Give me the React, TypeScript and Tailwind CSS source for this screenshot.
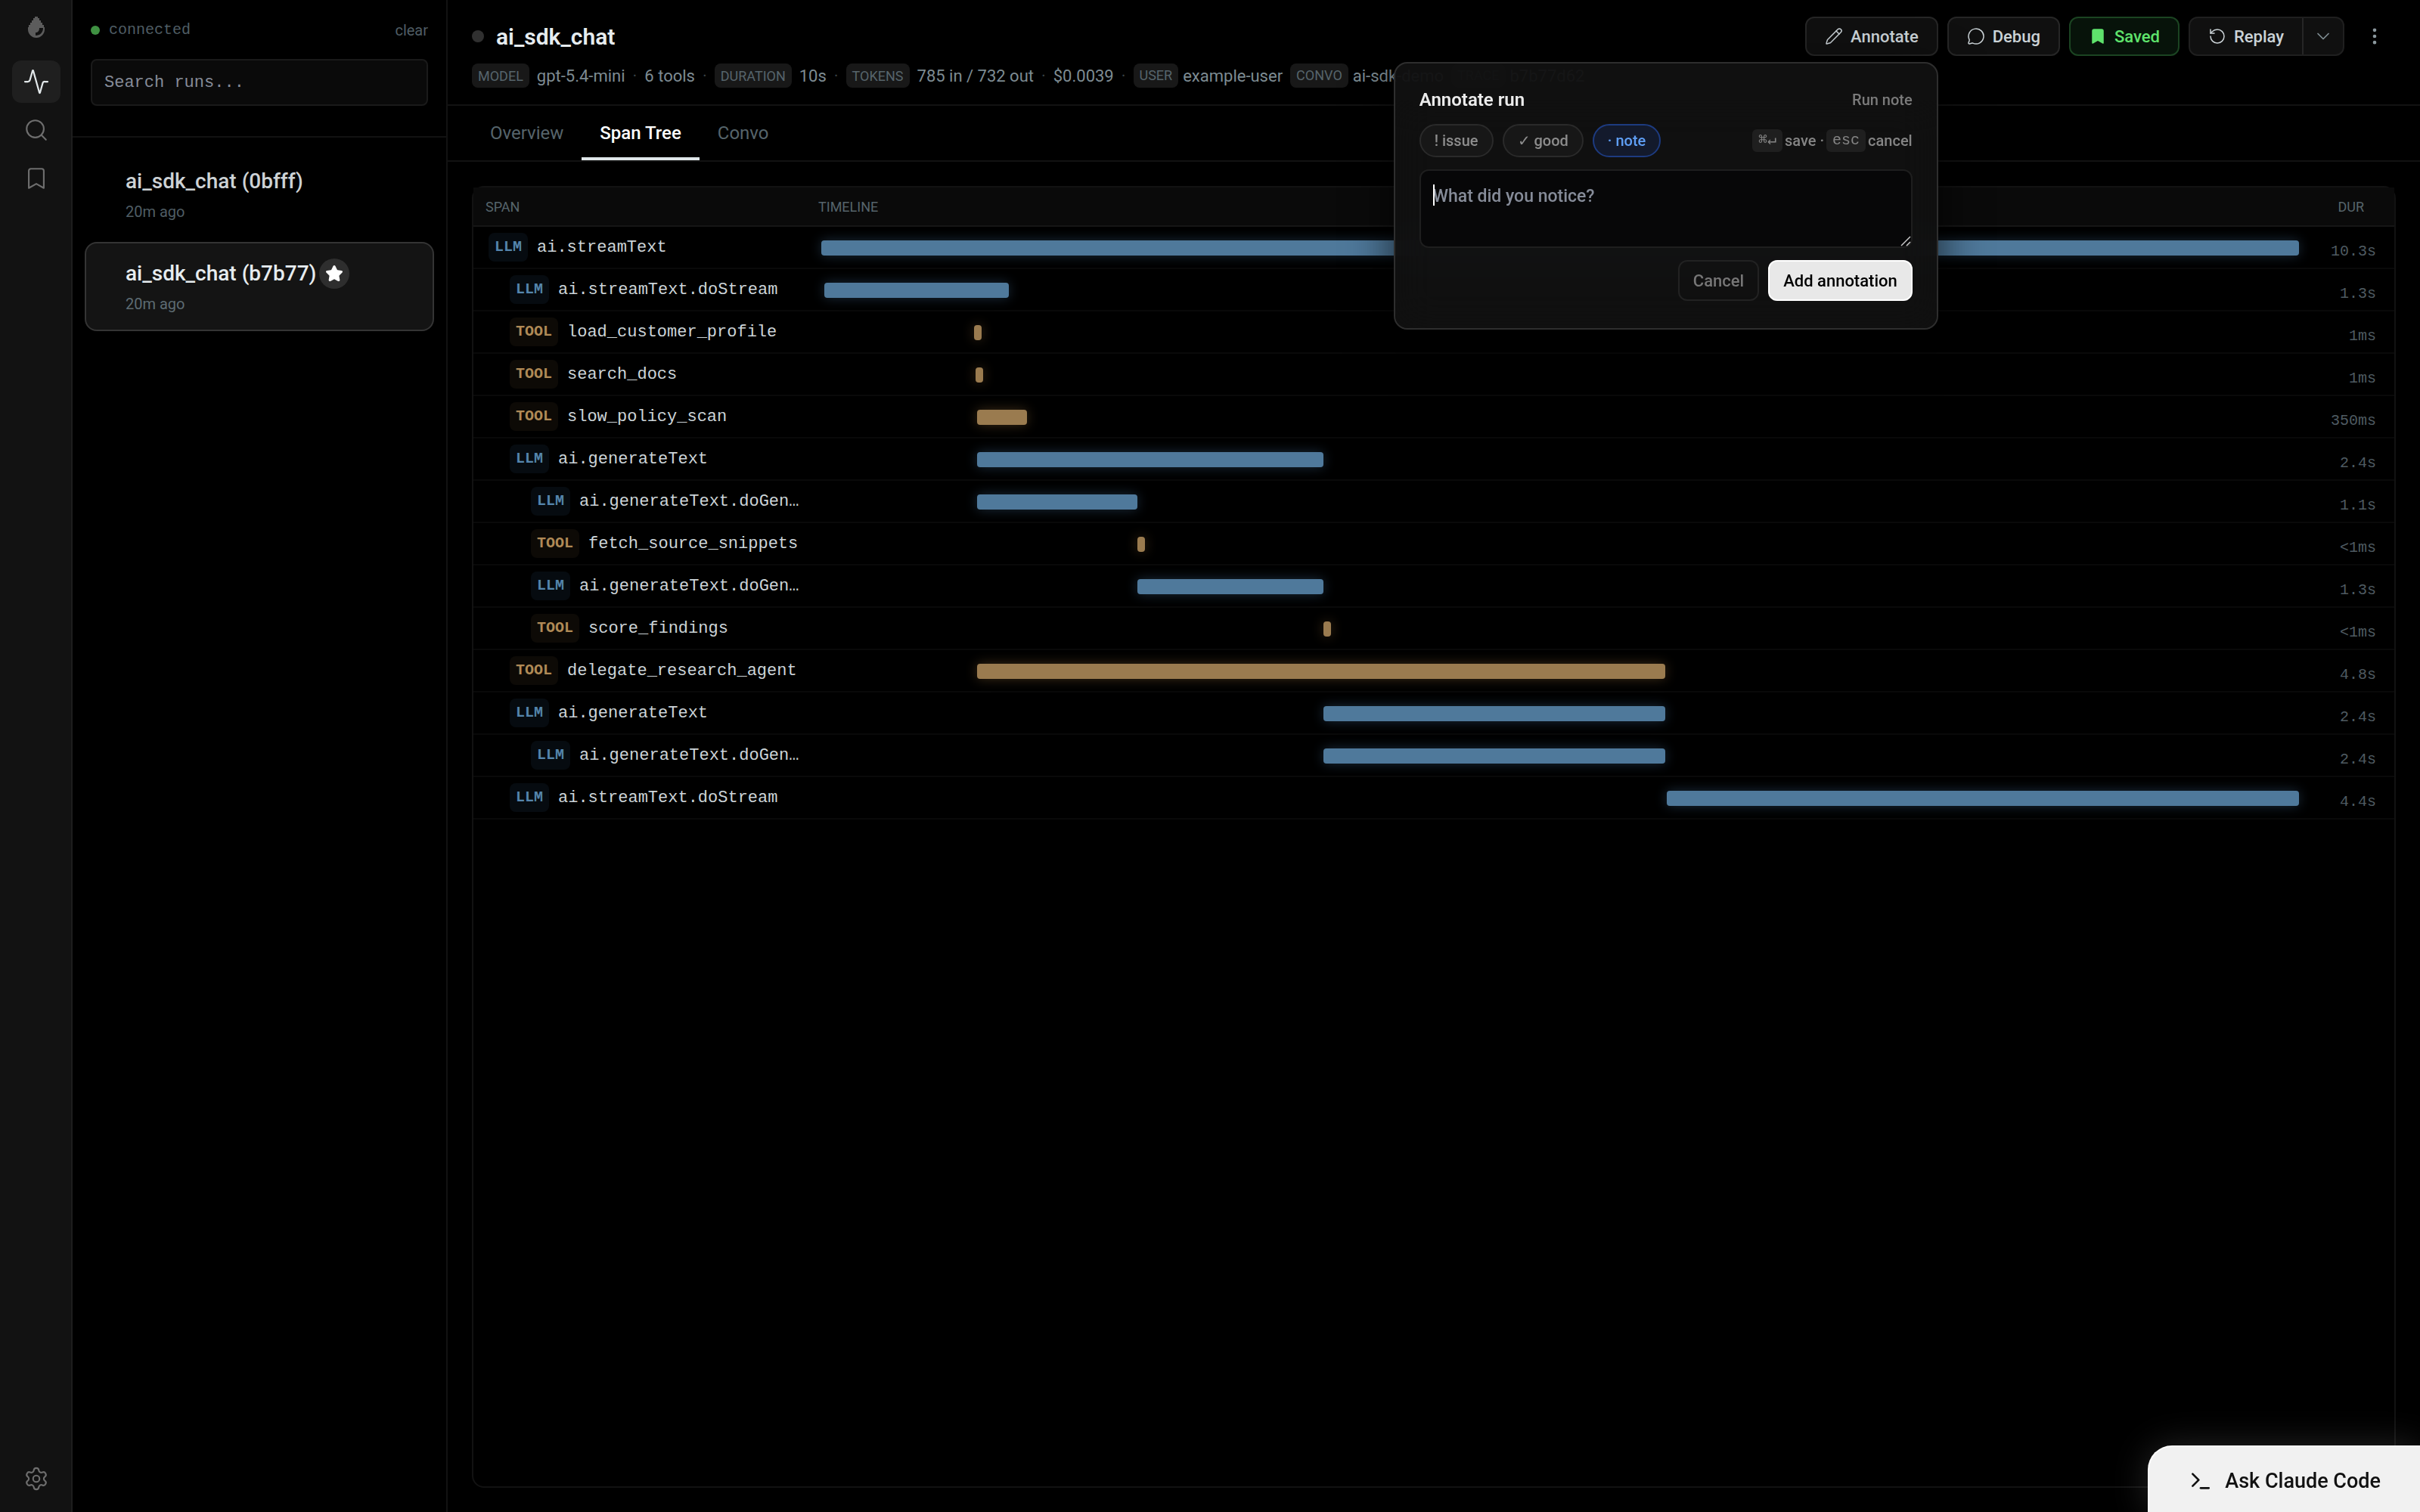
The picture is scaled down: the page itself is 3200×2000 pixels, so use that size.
import { Activity, Bookmark, ChevronDown, EllipsisVertical, MessageCircle, Pencil, RotateCcw, Search, Settings, Star, Terminal } from "lucide-react";

const TOTAL = 10300;

type Kind = "LLM" | "TOOL";

type Span = { kind: Kind; name: string; depth: number; start: number; ms: number; label: string };

const SPANS: Span[] = [
  { kind: "LLM",  name: "ai.streamText",           depth: 0, start: 0,    ms: 10300, label: "10.3s" },
  { kind: "LLM",  name: "ai.streamText.doStream",  depth: 1, start: 21,   ms: 1286,  label: "1.3s" },
  { kind: "TOOL", name: "load_customer_profile",   depth: 1, start: 1065, ms: 1,     label: "1ms" },
  { kind: "TOOL", name: "search_docs",             depth: 1, start: 1075, ms: 1,     label: "1ms" },
  { kind: "TOOL", name: "slow_policy_scan",        depth: 1, start: 1086, ms: 350,   label: "350ms" },
  { kind: "LLM",  name: "ai.generateText",         depth: 1, start: 1086, ms: 2414,  label: "2.4s" },
  { kind: "LLM",  name: "ai.generateText.doGen…",  depth: 2, start: 1086, ms: 1117,  label: "1.1s" },
  { kind: "TOOL", name: "fetch_source_snippets",   depth: 2, start: 2203, ms: 0,     label: "<1ms" },
  { kind: "LLM",  name: "ai.generateText.doGen…",  depth: 2, start: 2203, ms: 1297,  label: "1.3s" },
  { kind: "TOOL", name: "score_findings",          depth: 2, start: 3500, ms: 0,     label: "<1ms" },
  { kind: "TOOL", name: "delegate_research_agent", depth: 1, start: 1086, ms: 4796,  label: "4.8s" },
  { kind: "LLM",  name: "ai.generateText",         depth: 1, start: 3500, ms: 2382,  label: "2.4s" },
  { kind: "LLM",  name: "ai.generateText.doGen…",  depth: 2, start: 3500, ms: 2382,  label: "2.4s" },
  { kind: "LLM",  name: "ai.streamText.doStream",  depth: 1, start: 5893, ms: 4407,  label: "4.4s" },
];

const INDENT = ["pl-5", "pl-12", "pl-19"];

const BADGE: Record<Kind, string> = {
  LLM: "bg-[#060b10] text-[#5585ad]",
  TOOL: "bg-[#0d0a06] text-[#b08a56]",
};

const BAR: Record<Kind, string> = {
  LLM: "bg-[#4f799b] shadow-[0_0_16px_rgba(79,130,175,0.35)]",
  TOOL: "bg-[#9a7b4f] shadow-[0_0_16px_rgba(175,130,70,0.35)]",
};

const MONO = "font-['Liberation_Mono',monospace]";

function Drop() {
  return (
    <svg width="22" height="28" viewBox="0 0 22 28" fill="#5c5c5c" aria-hidden="true">
      <path d="M9 0h4v2h2v3h2v3h2v3h2v3h1v3c0 6-5 11-11 11S0 23 0 17v-3h1v-3h2V8h2V5h2V2h2z" />
      <path d="M15 15h5c0 6-4 10-10 10v-4c3 0 5-2 5-6z" fill="#121212" />
    </svg>
  );
}

function Rail() {
  const btn = "flex h-14 w-16 items-center justify-center rounded-xl";
  return (
    <nav className="flex w-24 shrink-0 flex-col items-center border-r-2 border-[#1e1e1e] bg-[#121212] pl-0.5 pt-[22px] pb-4 text-[#6e6e6e]">
      <Drop />
      <button aria-label="Runs" className={`${btn} mt-[30px] bg-[#1f1f1f] text-[#e2e8ea]`}>
        <Activity size={36} strokeWidth={1.5} />
      </button>
      <button aria-label="Search" className={`${btn} mt-2`}>
        <Search size={34} strokeWidth={1.5} />
      </button>
      <button aria-label="Saved runs" className={`${btn} mt-2`}>
        <Bookmark size={34} strokeWidth={1.5} />
      </button>
      <button aria-label="Settings" className={`${btn} mt-auto`}>
        <Settings size={34} strokeWidth={1.5} />
      </button>
    </nav>
  );
}

function RunList() {
  return (
    <aside className="w-[496px] shrink-0 border-r-2 border-[#121212]">
      <div className="border-b-2 border-[#121212] px-6 pt-6 pb-10">
        <div className="flex h-8 items-center text-[20px] text-[#4f5d64]">
          <span className="size-3 rounded-full bg-[#3f9142]" />
          <span className={`${MONO} ml-3`}>connected</span>
          <button className="ml-auto">clear</button>
        </div>
        <input
          type="text"
          aria-label="Search runs"
          placeholder="Search runs..."
          className={`${MONO} mt-[22px] h-[62px] w-full rounded-lg border-2 border-[#1a1a1a] bg-[#0a0a0a] px-4 text-[22px] text-white placeholder:text-[#868c99]`}
        />
      </div>
      <ul className="flex flex-col gap-1 px-4 py-4">
        <li className="h-[118px] rounded-2xl border-2 border-transparent pt-5 pl-13">
          <div className="flex h-10 items-center text-[28px] font-medium text-[#cdd2d5]">ai_sdk_chat (0bfff)</div>
          <div className="flex h-10 items-center text-[20px] text-[#4f5d64]">20m ago</div>
        </li>
        <li className="h-[118px] rounded-2xl border-2 border-[#343434] bg-[#141414] pt-5 pl-13">
          <div className="flex h-10 items-center gap-1 text-[28px] font-medium text-[#e6ecef]">
            ai_sdk_chat (b7b77)
            <span className="flex size-10 items-center justify-center rounded-full bg-[#2e2e2e]">
              <Star size={24} fill="#fff" color="#fff" />
            </span>
          </div>
          <div className="flex h-10 items-center text-[20px] text-[#5d6b72]">20m ago</div>
        </li>
      </ul>
    </aside>
  );
}

function Pill({ children }: { children: string }) {
  return <span className="flex h-8 items-center rounded-lg bg-[#181818] px-2 text-[18px] text-[#56646b]">{children}</span>;
}

function Dot() {
  return <span className="text-[#3a4145]">·</span>;
}

function AnnotatePopover() {
  const chip = "h-11 rounded-full border-2 px-[18px] text-[20px] font-medium";
  const kbd = "flex h-[30px] items-center rounded-md bg-[#1f1f1f] px-2";
  return (
    <div className="absolute top-[60px] right-0 z-20 w-[720px] rounded-[18px] border-2 border-[#2e2e2e] bg-[#111111]/96 shadow-[0_16px_64px_rgba(0,0,0,0.7)]">
      <div className="absolute inset-x-0 top-12 bottom-0 rounded-b-2xl backdrop-blur-xl" />
      <div className="relative px-8 pt-8 pb-9">
        <div className="flex h-8 items-center justify-between">
          <h2 className="text-[24px] font-semibold text-[#ececec]">Annotate run</h2>
          <span className="text-[20px] text-[#7b7b7b]">Run note</span>
        </div>
        <div className="mt-4 flex items-center gap-3">
          <button className={`${chip} border-[#2a2a2a] bg-[#171717] text-[#8d8d8d]`}>! issue</button>
          <button className={`${chip} border-[#2a2a2a] bg-[#171717] text-[#8d8d8d]`}>✓ good</button>
          <button className={`${chip} border-[#1d3b80] bg-[#131a2c] text-[#5f9ff5]`}>· note</button>
          <div className="ml-auto flex items-center gap-[3px] text-[20px] text-[#858585]">
            <kbd className={`${MONO} ${kbd}`}>⌘↵</kbd>
            <span>save ·</span>
            <kbd className={`${MONO} ${kbd}`}>esc</kbd>
            <span>cancel</span>
          </div>
        </div>
        <div className="relative mt-4">
          <textarea
            aria-label="Annotation"
            placeholder="What did you notice?"
            className="block h-[104px] w-full resize-none rounded-xl border-2 border-[#1e1e1e] bg-[#070708]/90 px-4 py-4 text-[23px] leading-9 text-white placeholder:text-[#868c99]"
          />
          <span className="absolute top-5 left-[18px] h-7 w-0.5 bg-white" />
          <svg className="absolute right-0.5 bottom-0.5" width="14" height="14" viewBox="0 0 14 14" stroke="#c8c8c8" strokeWidth="1.5" aria-hidden="true">
            <path d="M1 13 13 1M8 13l5-5" />
          </svg>
        </div>
        <div className="mt-4 flex justify-end gap-3 text-[22px]">
          <button className="h-[54px] rounded-xl border-2 border-[#222222] px-[18px] text-[#767676]">Cancel</button>
          <button className="h-[54px] rounded-xl border-2 border-white bg-[#e8e8e8] px-[18px] font-medium text-black">Add annotation</button>
        </div>
      </div>
    </div>
  );
}

function Header() {
  const btn = "flex h-[52px] items-center gap-2.5 rounded-xl border-2 px-6";
  return (
    <header className="border-b-2 border-[#121212] px-8 pt-[22px] pb-[22px]">
      <div className="flex items-center">
        <span className="size-4 rounded-full bg-[#303030]" />
        <h1 className="ml-4 pt-0.5 text-[30px] leading-9 font-semibold text-[#e6ecef]">ai_sdk_chat</h1>
        <div className="ml-auto flex items-center gap-3 text-[22px] font-medium text-[#cbd3d7]">
          <div className="relative">
            <button className={`${btn} border-[#262626] bg-[#101010]`}>
              <Pencil size={24} strokeWidth={1.5} />
              Annotate
            </button>
            <AnnotatePopover />
          </div>
          <button className={`${btn} border-[#262626] bg-[#101010]`}>
            <MessageCircle size={24} strokeWidth={1.5} />
            Debug
          </button>
          <button className={`${btn} border-[#1b4422] bg-[#07130a] text-[#5fe36c]`}>
            <Bookmark size={24} strokeWidth={1.5} fill="currentColor" />
            Saved
          </button>
          <div className="flex h-[52px] rounded-xl border-2 border-[#1f1f1f] bg-[#101010]">
            <button className="flex items-center gap-2.5 border-r-2 border-[#262626] px-6">
              <RotateCcw size={24} strokeWidth={1.5} />
              Replay
            </button>
            <button aria-label="Replay options" className="flex w-[52px] items-center justify-center text-[#7f8c92]">
              <ChevronDown size={28} strokeWidth={1.5} />
            </button>
          </div>
          <button aria-label="More" className="flex w-14 justify-center text-[#8a979d]">
            <EllipsisVertical size={28} />
          </button>
        </div>
      </div>
      <div className="mt-2.5 flex h-8 items-center gap-2.5 text-[22px] whitespace-nowrap text-[#7d8b92]">
        <Pill>MODEL</Pill>
        <span>gpt-5.4-mini</span>
        <Dot />
        <span>6 tools</span>
        <Dot />
        <Pill>DURATION</Pill>
        <span>10s</span>
        <Dot />
        <Pill>TOKENS</Pill>
        <span>785 in / 732 out</span>
        <Dot />
        <span>$0.0039</span>
        <Dot />
        <span className="flex gap-1.5"><Pill>USER</Pill>example-user</span>
        <span className="flex gap-1.5"><Pill>CONVO</Pill>ai-sdk-demo</span>
        <span className="flex gap-1.5"><Pill>TRACE</Pill>b7b77d62</span>
      </div>
    </header>
  );
}

function SpanRow({ span }: { span: Span }) {
  return (
    <tr>
      <td className={`h-14 border-b-2 border-[#090909] ${INDENT[span.depth]}`}>
        <div className="flex items-center gap-3">
          <span className={`${MONO} flex h-[38px] items-center rounded-lg px-2 text-[20px] font-bold ${BADGE[span.kind]}`}>{span.kind}</span>
          <span className={`${MONO} truncate text-[22px] text-[#ccd4d8]`}>{span.name}</span>
        </div>
      </td>
      <td className="border-b-2 border-[#090909] pt-0.5 pl-1">
        <div
          className={`h-5 min-w-2.5 rounded-sm ${BAR[span.kind]}`}
          style={{ marginLeft: `${(span.start / TOTAL) * 100}%`, width: `${(span.ms / TOTAL) * 100}%` }}
        />
      </td>
      <td className={`${MONO} border-b-2 border-[#090909] pt-3 pr-6 text-right text-[20px] text-[#4f5b62]`}>{span.label}</td>
    </tr>
  );
}

export default function App() {
  const tab = "h-[72px] border-b-4 px-6 pt-1 text-[24px]";
  return (
    <div className="flex h-screen overflow-hidden bg-black font-[Roboto,sans-serif]">
      <Rail />
      <RunList />
      <main className="flex min-w-0 flex-1 flex-col">
        <Header />
        <div className="flex border-b-2 border-[#121212] px-8">
          <button className={`${tab} border-transparent text-[#56646b]`}>Overview</button>
          <button className={`${tab} border-[#dfe6e9] font-medium text-white`}>Span Tree</button>
          <button className={`${tab} border-transparent text-[#56646b]`}>Convo</button>
        </div>
        <div className="mx-8 mt-8 mb-8 flex-1 rounded-2xl border-2 border-[#121212]">
          <table className="w-full table-fixed border-separate border-spacing-0">
            <thead>
              <tr className="bg-[#0a0a0a] text-left text-[18px] text-[#56646b]">
                <th className="h-[52px] w-[456px] border-b-2 border-[#161616] pl-4 font-normal">SPAN</th>
                <th className="border-b-2 border-[#161616] font-normal">TIMELINE</th>
                <th className="w-[126px] border-b-2 border-[#161616] pr-10 text-right font-normal">DUR</th>
              </tr>
            </thead>
            <tbody>
              {SPANS.map((s, i) => (
                <SpanRow key={i} span={s} />
              ))}
            </tbody>
          </table>
        </div>
      </main>
      <button className="fixed right-0 bottom-0 flex h-[88px] items-center gap-4 rounded-tl-[32px] border-t-2 border-l-2 border-white bg-[#f1f1f1] px-13 pt-1 text-[27px] font-medium text-[#111111] shadow-[0_0_48px_rgba(255,255,255,0.15)]">
        <Terminal size={32} />
        Ask Claude Code
      </button>
    </div>
  );
}
